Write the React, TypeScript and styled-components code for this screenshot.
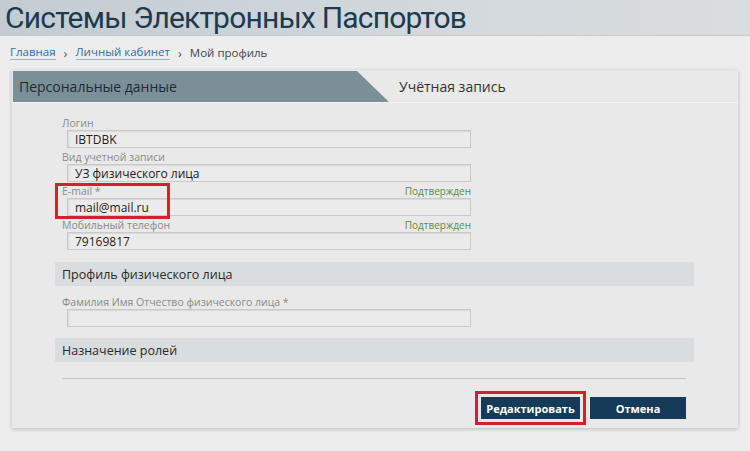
import React from "react";
import styled, { createGlobalStyle } from "styled-components";

const GlobalStyle = createGlobalStyle`
  body {
    margin: 0;
    background: #ededed;
    font-family: "Open Sans", "Noto Sans", sans-serif;
    color: #333;
  }
`;

const Page = styled.div`
  width: 750px;
  height: 451px;
  overflow: hidden;
`;

const Header = styled.header`
  height: 36px;
  padding: 0 5px;
  display: flex;
  align-items: center;
  background: linear-gradient(90deg, #c3ccd3 0%, #d3d9dd 60%, #d9dde0 100%);
  border-bottom: 1px solid #c4c9cd;
  box-sizing: border-box;
`;

const Title = styled.h1`
  margin: 0;
  font-family: Roboto, "Open Sans", sans-serif;
  font-weight: 400;
  font-size: 30px;
  color: #1d3b4d;
  letter-spacing: -0.8px;
`;

const Crumbs = styled.nav`
  height: 33px;
  padding: 0 10px;
  display: flex;
  align-items: center;
  gap: 8px;
  font-size: 11.5px;
  color: #444;
`;

const CrumbLink = styled.a`
  color: #2f6ea6;
  text-decoration: none;
  border-bottom: 1px solid #9ab6cf;
  line-height: 14px;
`;

const Sep = styled.span`
  color: #555;
  font-size: 13px;
`;

const Panel = styled.section`
  margin: 1px 12px 0;
  height: 358px;
  background: #e9e9e9;
  box-shadow: 0 1px 4px rgba(0, 0, 0, 0.22);
  box-sizing: border-box;
  padding-top: 1px;
  display: flex;
  flex-direction: column;
`;

const Tabs = styled.div`
  display: flex;
  align-items: center;
  height: 31px;
  border-bottom: 1px solid #f4f4f4;
`;

const ActiveTab = styled.div`
  width: 376px;
  height: 100%;
  padding-left: 6px;
  margin-left: 1px;
  box-sizing: border-box;
  display: flex;
  align-items: center;
  background: #7b8f99;
  clip-path: polygon(0 0, 344px 0, 376px 100%, 0 100%);
  font-size: 14px;
  color: #1c2c35;
`;

const Tab = styled.div`
  padding-left: 10px;
  font-size: 14px;
  color: #333;
`;

const Body = styled.div`
  padding: 13px 44px 0 43px;
  display: flex;
  flex-direction: column;
`;

const Fields = styled.div<{ $top?: number }>`
  margin-top: ${(p) => p.$top ?? 0}px;
  padding-left: 7px;
  display: flex;
  flex-direction: column;
  gap: 2px;
`;

const Field = styled.div`
  position: relative;
  width: 409px;
`;

const LabelRow = styled.div`
  height: 14px;
  display: flex;
  justify-content: space-between;
  align-items: center;
  font-size: 10.5px;
  color: #8a8a8a;
`;

const Status = styled.span`
  color: #5b8c3e;
  font-size: 10px;
`;

const Input = styled.div`
  margin-left: 5px;
  height: 18px;
  box-sizing: border-box;
  border: 1px solid #c9c9c9;
  box-shadow: inset 1px 1px 1px rgba(0, 0, 0, 0.08);
  background: #ebebeb;
  padding-left: 7px;
  display: flex;
  align-items: center;
  font-size: 12px;
  color: #222;
`;

const Highlight = styled.div`
  position: absolute;
  left: -7px;
  top: -1px;
  width: 115px;
  height: 36px;
  box-sizing: border-box;
  border: 3px solid #d3202d;
  pointer-events: none;
`;

const SectionBar = styled.div<{ $top: number }>`
  margin-top: ${(p) => p.$top}px;
  height: 24px;
  padding-left: 7px;
  display: flex;
  align-items: center;
  background: #d9dddf;
  font-size: 12.5px;
  color: #2a2a2a;
`;

const Divider = styled.hr`
  margin: 16px 8px 0 7px;
  border: 0;
  border-top: 1px solid #c4c4c4;
`;

const Actions = styled.div`
  margin: 18px 8px 0 0;
  display: flex;
  justify-content: flex-end;
  gap: 10px;
`;

const Button = styled.button<{ $width: number; $marked?: boolean }>`
  width: ${(p) => p.$width}px;
  height: 22px;
  border: 0;
  padding: 0;
  background: #163b58;
  color: #fff;
  font-family: "Open Sans", sans-serif;
  font-weight: 700;
  font-size: 11px;
  outline: ${(p) => (p.$marked ? "3px solid #d3202d" : "none")};
  outline-offset: 3px;
`;

const fields = [
  { label: "Логин", value: "IBTDBK" },
  { label: "Вид учетной записи", value: "УЗ физического лица" },
  { label: "E-mail *", value: "mail@mail.ru", status: "Подтвержден", marked: true },
  { label: "Мобильный телефон", value: "79169817", status: "Подтвержден" },
];

export default function App() {
  return (
    <Page>
      <GlobalStyle />
      <Header>
        <Title>Системы Электронных Паспортов</Title>
      </Header>
      <Crumbs>
        <CrumbLink href="#">Главная</CrumbLink>
        <Sep>›</Sep>
        <CrumbLink href="#">Личный кабинет</CrumbLink>
        <Sep>›</Sep>
        <span>Мой профиль</span>
      </Crumbs>
      <Panel>
        <Tabs>
          <ActiveTab>Персональные данные</ActiveTab>
          <Tab>Учётная запись</Tab>
        </Tabs>
        <Body>
          <Fields>
            {fields.map((f) => (
              <Field key={f.label}>
                <LabelRow>
                  <span>{f.label}</span>
                  {f.status && <Status>{f.status}</Status>}
                </LabelRow>
                <Input>{f.value}</Input>
                {f.marked && <Highlight />}
              </Field>
            ))}
          </Fields>
          <SectionBar $top={12}>Профиль физического лица</SectionBar>
          <Fields $top={9}>
            <Field>
              <LabelRow>
                <span>Фамилия Имя Отчество физического лица *</span>
              </LabelRow>
              <Input />
            </Field>
          </Fields>
          <SectionBar $top={11}>Назначение ролей</SectionBar>
          <Divider />
          <Actions>
            <Button $width={99} $marked>
              Редактировать
            </Button>
            <Button $width={96}>Отмена</Button>
          </Actions>
        </Body>
      </Panel>
    </Page>
  );
}
